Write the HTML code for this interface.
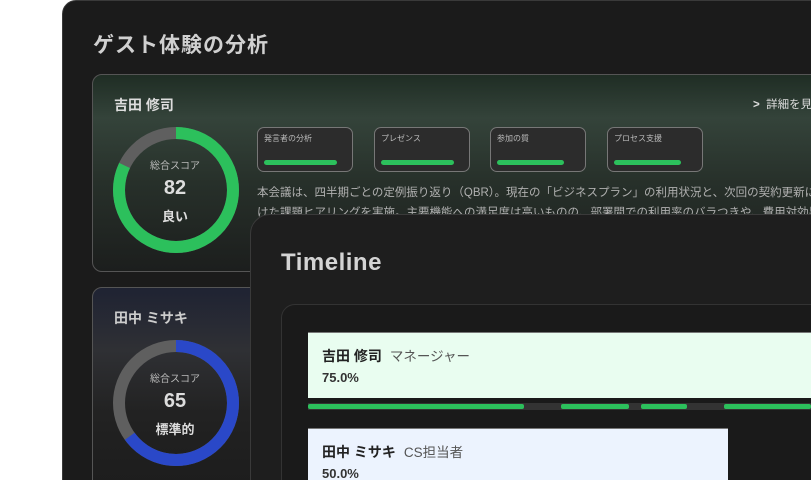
<!DOCTYPE html>
<html><head><meta charset="utf-8"><style>
*{margin:0;padding:0;box-sizing:border-box}
html,body{width:811px;height:480px;overflow:hidden}
body{background:#fff;position:relative;font-family:"Liberation Sans","Noto Sans CJK JP",sans-serif}
#clip{position:absolute;left:0;top:0;width:811px;height:480px;overflow:hidden}
.outer{position:absolute;left:62px;top:0;width:780px;height:500px;background:#1b1b1b;border:1px solid #3a3a3a;border-radius:14px}
.title{position:absolute;left:93px;top:29px;font-size:21px;font-weight:bold;color:#d0d0d0;letter-spacing:1px}
.card{position:absolute;left:92px;width:740px;border:1px solid #555;border-radius:10px;overflow:hidden}
.c1{top:74px;height:198px;background:linear-gradient(180deg,#1f2d24 0%,#34433a 22%,#27302a 55%,#1c1e1d 100%)}
.c2{top:287px;height:210px;background:linear-gradient(180deg,#1f2333 0%,#2f3034 30%,#222 60%,#1c1c1c 100%)}
.name{position:absolute;left:21px;top:20px;font-size:14px;font-weight:bold;color:#ddd}
.donut{position:absolute;left:19px;top:51px}
.dl{position:absolute;left:19px;width:126px;text-align:center;color:#ddd}
.chip{position:absolute;top:52px;width:96px;height:45px;border:1px solid #777;border-radius:7px;background:#2c2c2c}
.chip span{position:absolute;left:6px;top:5px;font-size:8px;color:#bbb}
.chip i{position:absolute;left:6px;top:32px;width:73px;height:5px;border-radius:3px;background:#2cc05c}
.para{position:absolute;left:164px;top:108px;font-size:11.5px;line-height:20px;color:#b0b0b0;white-space:nowrap;letter-spacing:0}
.more{position:absolute;left:660px;top:21px;font-size:11.5px;color:#ddd}
.tl{position:absolute;left:250px;top:214px;width:580px;height:290px;background:#1e1e1e;border:1px solid #3a3a3a;border-radius:20px}
.tlt{position:absolute;left:281px;top:249px;font-size:24px;font-weight:bold;color:#d4d4d4;letter-spacing:.5px}
.inner{position:absolute;left:281px;top:304px;width:550px;height:190px;background:#1a1a1a;border:1px solid #333;border-radius:14px}
.row{position:absolute;left:308px;border-top:1px solid #777}
.r1{top:332px;width:503px;height:66px;background:#e9fdf0}
.r2{top:428px;width:420px;height:60px;background:#ecf3fe}
.rn{position:absolute;left:14px;top:12px;font-size:14px;font-weight:bold;color:#222}
.rn small{font-weight:normal;color:#555;font-size:13.5px;margin-left:8px}
.rp{position:absolute;left:14px;top:37px;font-size:13px;font-weight:bold;color:#333}
.bar{position:absolute;top:404px;height:5px;background:#2cc05c;border-radius:2px}
</style></head><body><div id="clip">
<div class="outer"></div>
<div class="title">ゲスト体験の分析</div>
<div class="card c1">
 <div class="name">吉田 修司</div>
 <svg class="donut" width="128" height="128" viewBox="0 0 128 128"><circle cx="64" cy="64" r="57" fill="none" stroke="#5f5f5f" stroke-width="12"/><circle cx="64" cy="64" r="57" fill="none" stroke="#2cc05c" stroke-width="12" stroke-dasharray="293.7 400" transform="rotate(-90 64 64)"/></svg>
 <div class="dl" style="top:82px;font-size:10px;color:#bbb">総合スコア</div>
 <div class="dl" style="top:102px;font-size:20px;font-weight:bold">82</div>
 <div class="dl" style="top:131px;font-size:13px;font-weight:bold">良い</div>
 <div class="chip" style="left:164px"><span>発言者の分析</span><i></i></div>
 <div class="chip" style="left:281px"><span>プレゼンス</span><i></i></div>
 <div class="chip" style="left:397px"><span>参加の質</span><i style="width:67px"></i></div>
 <div class="chip" style="left:514px"><span>プロセス支援</span><i style="width:67px"></i></div>
 <div class="para">本会議は、四半期ごとの定例振り返り（QBR）。現在の「ビジネスプラン」の利用状況と、次回の契約更新に向<br>けた課題ヒアリングを実施。主要機能への満足度は高いものの、部署間での利用率のバラつきや、費用対効果の</div>
 <div class="more"><b>&gt;</b>&nbsp; 詳細を見る</div>
</div>
<div class="card c2">
 <div class="name" style="color:#ccc">田中 ミサキ</div>
 <svg class="donut" width="128" height="128" viewBox="0 0 128 128"><circle cx="64" cy="64" r="57" fill="none" stroke="#5f5f5f" stroke-width="12"/><circle cx="64" cy="64" r="57" fill="none" stroke="#2a48c8" stroke-width="12" stroke-dasharray="232.8 400" transform="rotate(-90 64 64)"/></svg>
 <div class="dl" style="top:82px;font-size:10px;color:#bbb">総合スコア</div>
 <div class="dl" style="top:102px;font-size:20px;font-weight:bold">65</div>
 <div class="dl" style="top:131px;font-size:13px;font-weight:bold">標準的</div>
</div>
<div class="tl"></div>
<div class="tlt">Timeline</div>
<div class="inner"></div>
<div class="row r1"><div class="rn">吉田 修司<small>マネージャー</small></div><div class="rp">75.0%</div></div>
<div style="position:absolute;left:308px;top:403px;width:503px;height:7px;background:#333"></div>
<div class="bar" style="left:308px;width:216px"></div>
<div class="bar" style="left:561px;width:68px"></div>
<div class="bar" style="left:641px;width:46px"></div>
<div class="bar" style="left:724px;width:87px"></div>
<div class="row r2"><div class="rn">田中 ミサキ<small>CS担当者</small></div><div class="rp">50.0%</div></div>
</div></body></html>
